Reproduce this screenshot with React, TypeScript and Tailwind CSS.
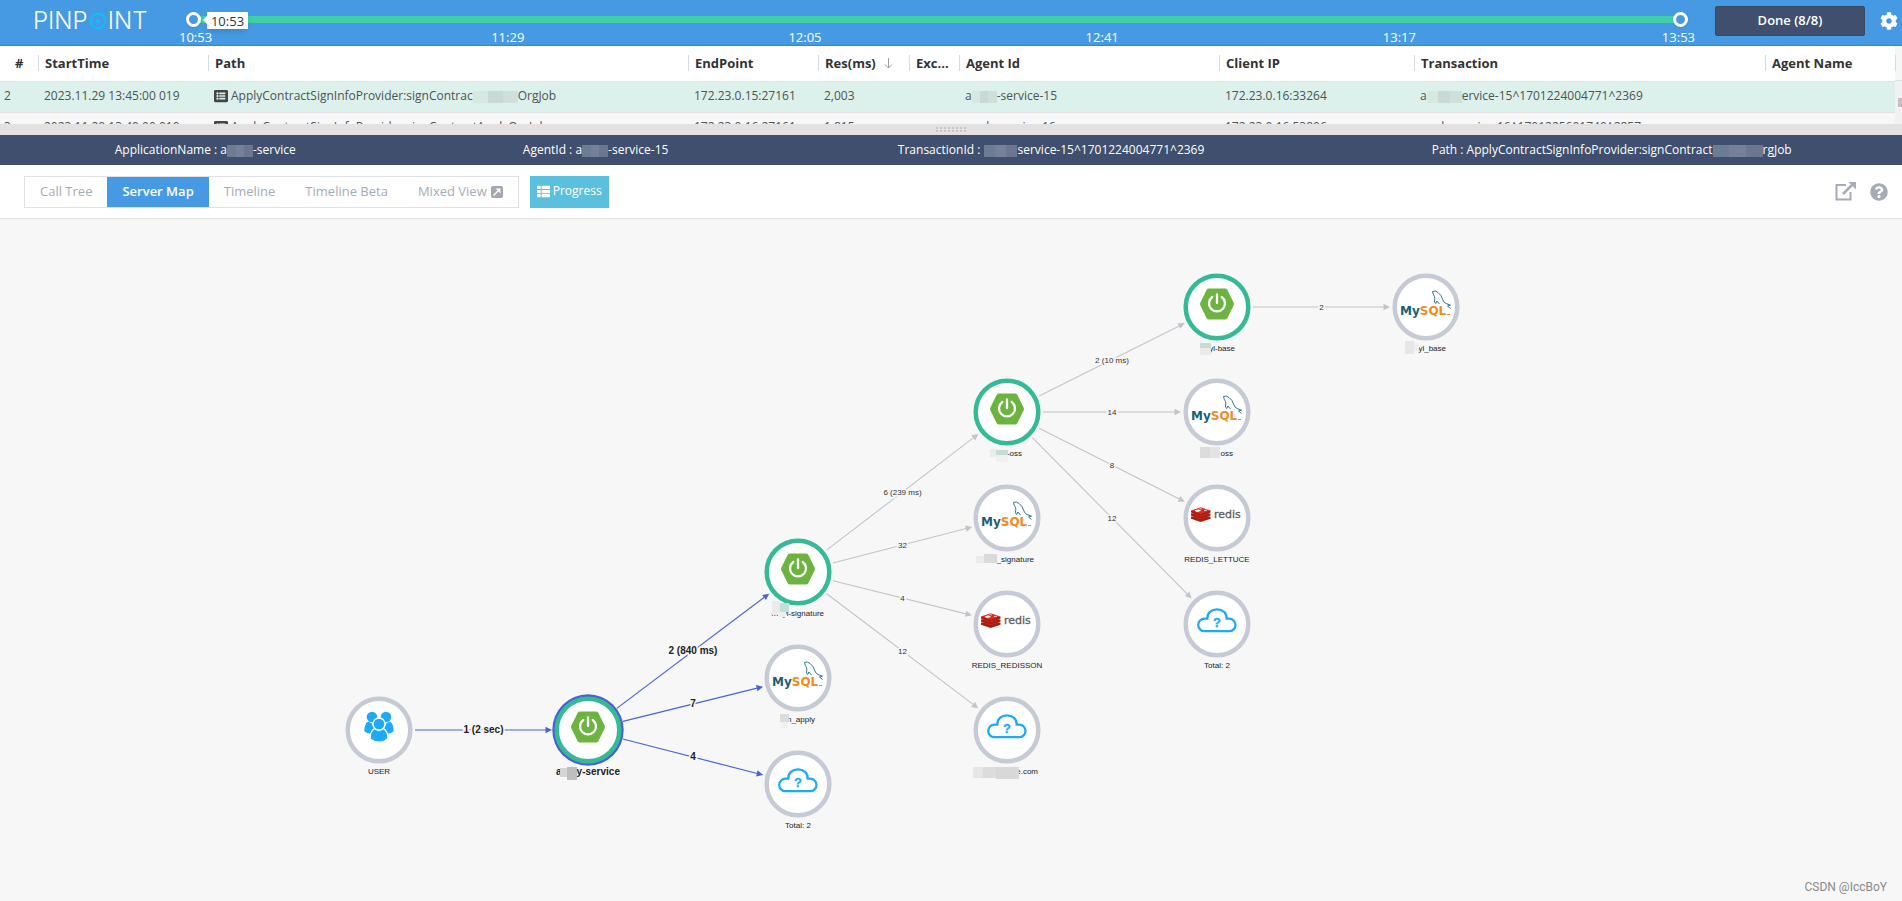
import { useState } from "react";
import type { ReactNode } from "react";
import { FaCog, FaListAlt, FaQuestionCircle, FaThList } from "react-icons/fa";

type Patch = { x: number; y: number; w: number; h: number; color: string };

type MapNode = {
  id: string;
  x: number;
  y: number;
  kind: "user" | "spring" | "mysql" | "redis" | "unknown";
  label: string;
  // right edge of the label, for labels whose first letters are masked
  labelEnd?: number;
  patches?: Patch[];
  selected?: boolean;
};

type MapLink = { from: string; to: string; label: string; active?: boolean };

const nodes: MapNode[] = [
  { id: "user", x: 379, y: 511, kind: "user", label: "USER" },
  {
    id: "apply",
    x: 588,
    y: 511,
    kind: "spring",
    label: "apply-service",
    selected: true,
    patches: [
      { x: -28, y: 38, w: 8, h: 9, color: "#d4d4d4" },
      { x: -21, y: 37, w: 10, h: 13, color: "#bebebe" },
    ],
  },
  {
    id: "signature",
    x: 798,
    y: 353,
    kind: "spring",
    label: "mayi-signature",
    labelEnd: 26,
    patches: [
      { x: -26, y: 29, w: 8, h: 14, color: "#ebebeb" },
      { x: -18, y: 31, w: 9, h: 9, color: "#bfe0d5" },
      { x: -20, y: 40, w: 8, h: 5, color: "#f0f0f0" },
    ],
  },
  {
    id: "mysql-apply",
    x: 798,
    y: 459,
    kind: "mysql",
    label: "n_apply",
    labelEnd: 17,
    patches: [
      { x: -18, y: 36, w: 9, h: 8, color: "#dcdcdc" },
      { x: -17, y: 44, w: 7, h: 6, color: "#f0f0f0" },
    ],
  },
  { id: "unknown-apply", x: 798, y: 565, kind: "unknown", label: "Total: 2" },
  {
    id: "oss",
    x: 1007,
    y: 193,
    kind: "spring",
    label: "-oss",
    labelEnd: 15,
    patches: [
      { x: -17, y: 37, w: 7, h: 8, color: "#ebebeb" },
      { x: -11, y: 38, w: 12, h: 5, color: "#c5dbd3" },
      { x: -11, y: 43, w: 12, h: 7, color: "#f0f0f0" },
    ],
  },
  {
    id: "mysql-signature",
    x: 1007,
    y: 299,
    kind: "mysql",
    label: "_signature",
    labelEnd: 27,
    patches: [
      { x: -31, y: 38, w: 8, h: 7, color: "#ebebeb" },
      { x: -23, y: 36, w: 13, h: 9, color: "#dadada" },
    ],
  },
  { id: "redisson", x: 1007, y: 405, kind: "redis", label: "REDIS_REDISSON" },
  {
    id: "unknown-com",
    x: 1007,
    y: 511,
    kind: "unknown",
    label: "e.com",
    labelEnd: 31,
    patches: [
      { x: -34, y: 37, w: 10, h: 11, color: "#e6e6e6" },
      { x: -24, y: 37, w: 13, h: 11, color: "#dcdcdc" },
      { x: -11, y: 37, w: 23, h: 12, color: "#d8d8d8" },
    ],
  },
  {
    id: "base",
    x: 1217,
    y: 88,
    kind: "spring",
    label: "yl-base",
    labelEnd: 18,
    patches: [
      { x: -17, y: 36, w: 11, h: 5, color: "#c5dbd3" },
      { x: -17, y: 41, w: 11, h: 7, color: "#eaeaea" },
    ],
  },
  {
    id: "mysql-oss",
    x: 1217,
    y: 193,
    kind: "mysql",
    label: "oss",
    labelEnd: 16,
    patches: [
      { x: -17, y: 35, w: 10, h: 11, color: "#dcdcdc" },
      { x: -7, y: 35, w: 10, h: 11, color: "#e3e3e3" },
    ],
  },
  { id: "lettuce", x: 1217, y: 299, kind: "redis", label: "REDIS_LETTUCE" },
  { id: "unknown-oss", x: 1217, y: 405, kind: "unknown", label: "Total: 2" },
  {
    id: "mysql-base",
    x: 1426,
    y: 88,
    kind: "mysql",
    label: "yl_base",
    labelEnd: 20,
    patches: [
      { x: -21, y: 34, w: 9, h: 13, color: "#e6e6e6" },
      { x: -12, y: 36, w: 5, h: 8, color: "#efefef" },
    ],
  },
];

const links: MapLink[] = [
  { from: "user", to: "apply", label: "1 (2 sec)", active: true },
  { from: "apply", to: "signature", label: "2 (840 ms)", active: true },
  { from: "apply", to: "mysql-apply", label: "7", active: true },
  { from: "apply", to: "unknown-apply", label: "4", active: true },
  { from: "signature", to: "oss", label: "6 (239 ms)" },
  { from: "signature", to: "mysql-signature", label: "32" },
  { from: "signature", to: "redisson", label: "4" },
  { from: "signature", to: "unknown-com", label: "12" },
  { from: "oss", to: "base", label: "2 (10 ms)" },
  { from: "oss", to: "mysql-oss", label: "14" },
  { from: "oss", to: "lettuce", label: "8" },
  { from: "oss", to: "unknown-oss", label: "12" },
  { from: "base", to: "mysql-base", label: "2" },
];

const tabs = ["Call Tree", "Server Map", "Timeline", "Timeline Beta", "Mixed View"];

function Mask({ className = "", dark = false }: { className?: string; dark?: boolean }) {
  return (
    <span
      className={`inline-flex h-3 align-middle overflow-hidden ${className}`}
      aria-hidden="true"
    >
      <span className={`flex-1 ${dark ? "bg-[#6b7c93]" : "bg-[#d6e8e2]"}`} />
      <span className={`flex-1 ${dark ? "bg-[#77809a]" : "bg-[#c9dad5]"}`} />
      <span className={`flex-1 ${dark ? "bg-[#6c7690]" : "bg-[#cfe0db]"}`} />
    </span>
  );
}

function Logo() {
  return (
    <a
      href="#"
      aria-label="Pinpoint"
      className="flex w-[194px] shrink-0 items-center pb-[3px] pl-[33px] font-['Inter',sans-serif] text-2xl leading-none font-light text-white"
    >
      PINP
      <svg width="20" height="18" viewBox="0 0 20 18">
        <circle cx="10" cy="9" r="7.3" fill="none" stroke="#08c4fb" strokeWidth="1.7" />
        <circle cx="10" cy="9" r="2" fill="#08c4fb" />
      </svg>
      INT
    </a>
  );
}

const rangeClass =
  "pointer-events-none absolute -left-2 top-3 h-[15px] w-[calc(100%+16px)] appearance-none bg-transparent [&::-webkit-slider-thumb]:pointer-events-auto [&::-webkit-slider-thumb]:size-[15px] [&::-webkit-slider-thumb]:cursor-pointer [&::-webkit-slider-thumb]:appearance-none [&::-webkit-slider-thumb]:rounded-full [&::-webkit-slider-thumb]:border-3 [&::-webkit-slider-thumb]:border-white [&::-webkit-slider-thumb]:bg-[#469ae4] [&::-webkit-slider-thumb]:shadow";

function TimeSlider() {
  const [start, setStart] = useState(0);
  const [end, setEnd] = useState(180);

  return (
    <div className="relative flex-1 pt-4 text-[13px] leading-4 text-white">
      <div className="h-[7px] bg-[#3fd0a7]" />
      <input
        type="range"
        aria-label="Start of range"
        min={0}
        max={180}
        value={start}
        onChange={(e) => setStart(Math.min(Number(e.target.value), end))}
        className={rangeClass}
      />
      <input
        type="range"
        aria-label="End of range"
        min={0}
        max={180}
        value={end}
        onChange={(e) => setEnd(Math.max(Number(e.target.value), start))}
        className={rangeClass}
      />
      <div className="absolute left-[13px] top-3 flex h-[17px] w-[41px] items-center justify-center bg-white text-[#333] shadow-md">
        <span className="absolute -left-1 top-1 border-y-4 border-r-4 border-y-transparent border-r-white" />
        10:53
      </div>
      <div className="mt-[6px] grid grid-cols-5">
        <span className="-ml-[15px]">10:53</span>
        <span>11:29</span>
        <span>12:05</span>
        <span>12:41</span>
        <span className="-mr-[15px] flex justify-between">
          <span>13:17</span>
          <span>13:53</span>
        </span>
      </div>
    </div>
  );
}

function Th({ children }: { children: ReactNode }) {
  return (
    <th className="p-0 text-left font-bold">
      <div className="flex items-center gap-2 border-l border-[#d8dbe0] pl-1.5 leading-4 whitespace-nowrap">
        {children}
      </div>
    </th>
  );
}

function TransactionTable() {
  const cell = "overflow-hidden p-0 pb-px pl-1.5 leading-5 whitespace-nowrap";
  return (
    <div className="flex h-[78px] overflow-hidden bg-white">
      <table className="min-w-0 flex-1 table-fixed border-collapse">
        <colgroup>
          <col className="w-[38px]" />
          <col className="w-[170px]" />
          <col className="w-[480px]" />
          <col className="w-[130px]" />
          <col className="w-[91px]" />
          <col className="w-[50px]" />
          <col className="w-[260px]" />
          <col className="w-[195px]" />
          <col className="w-[351px]" />
          <col className="w-[130px]" />
        </colgroup>
        <thead>
          <tr className="h-[35px] border-b border-[#dfe1e4] text-[13px] text-[#333]">
            <th className="p-0 pl-[15px] text-left font-bold">#</th>
            <Th>StartTime</Th>
            <Th>Path</Th>
            <Th>EndPoint</Th>
            <Th>
              Res(ms)
              <svg width="9" height="11" viewBox="0 0 9 11" fill="none" stroke="#9a9fa6">
                <path d="M4.5 0v10M1 6.500l3.500 3.500 3.500-3.500" />
              </svg>
            </Th>
            <Th>Exc...</Th>
            <Th>Agent Id</Th>
            <Th>Client IP</Th>
            <Th>Transaction</Th>
            <Th>Agent Name</Th>
          </tr>
        </thead>
        <tbody className="text-xs text-[#4f5256]">
          <tr className="h-[31px] border-b border-[#dfe1e4] bg-[#dcf1eb]">
            <td className="p-0 pb-px pl-1">2</td>
            <td className={cell}>2023.11.29 13:45:00 019</td>
            <td className={cell}>
              <span className="flex items-center gap-[3px]">
                <FaListAlt className="size-[14px] text-[#444]" />
                <span>
                  ApplyContractSignInfoProvider:signContrac
                  <Mask className="w-[45px]" />
                  OrgJob
                </span>
              </span>
            </td>
            <td className={cell}>172.23.0.15:27161</td>
            <td className={cell}>2,003</td>
            <td />
            <td className={cell}>
              a<Mask className="w-[25px]" />
              -service-15
            </td>
            <td className={cell}>172.23.0.16:33264</td>
            <td className={cell}>
              a<Mask className="w-[35px]" />
              ervice-15^1701224004771^2369
            </td>
            <td />
          </tr>
          <tr className="h-[31px] bg-[#f7f7f7]">
            <td className="p-0 pb-px pl-1">3</td>
            <td className={cell}>2023.11.29 13:40:00 019</td>
            <td className={cell}>
              <span className="flex items-center gap-[3px]">
                <FaListAlt className="size-[14px] text-[#444]" />
                ApplyContractSignInfoProvider:signContractApplyOrgJob
              </span>
            </td>
            <td className={cell}>172.23.0.16:27161</td>
            <td className={cell}>1,815</td>
            <td />
            <td className={cell}>apply-service-16</td>
            <td className={cell}>172.23.0.16:53806</td>
            <td className={cell}>apply-service-16^1701225601740^2857</td>
            <td />
          </tr>
        </tbody>
      </table>
      <div className="flex w-[7px] flex-col">
        <div className="flex h-[35px] items-center border-b border-[#dfe1e4] bg-[#f5f7f7]">
          <span className="h-4 border-l border-[#d8dbe0]" />
        </div>
        <div className="flex-1 bg-[#f1f1f1] pt-[17px] pl-[3px]">
          <div className="h-[9px] bg-[#c1c1c1]" />
        </div>
      </div>
    </div>
  );
}

function NodeIcon({ kind }: { kind: MapNode["kind"] }) {
  if (kind === "user") {
    return (
      <g fill="#1eaaf6">
        <circle cx="-7" cy="-13" r="5.300" />
        <circle cx="7" cy="-13" r="5.300" />
        <path d="M-11-8.500c-2.500 1.500-3.700 5-3.700 9.500 1.500 1.800 4 2.600 7 2.600l3-5-3-5.500zM11-8.500c2.500 1.500 3.700 5 3.700 9.500-1.500 1.800-4 2.600-7 2.600l-3-5 3-5.500z" />
        <g stroke="#fff" strokeWidth="1.300">
          <path d="M-4.500-1.500c-3 2-4.500 5.500-4.500 10C-6.500 11 -3.500 12.200 0 12.200S6.500 11 9 8.500c0-4.500-1.500-8-4.500-10C2 .7-2 .7-4.500-1.500z" />
          <circle cx="0" cy="-6" r="6" />
        </g>
      </g>
    );
  }
  if (kind === "spring") {
    return (
      <g transform="translate(0 -3)">
        <path
          d="M-8-15.500H8q1.500 0 2.300 1.300l6.300 12.700q.8 1.500 0 3L10.300 14.200q-.8 1.300-2.300 1.300H-8q-1.500 0-2.300-1.300L-16.600 1.500q-.8-1.500 0-3l6.300-12.700q.8-1.300 2.300-1.300z"
          fill="#6db33f"
        />
        <path
          d="M-4.700-7A8 8 0 1 0 4.700-7M0-9.500V-1"
          fill="none"
          stroke="#fff"
          strokeWidth="2.300"
          strokeLinecap="round"
        />
      </g>
    );
  }
  if (kind === "mysql") {
    return (
      <g>
        <text
          x="-26"
          y="8"
          fontSize="12"
          fontWeight="bold"
          fontFamily="DejaVu Sans, sans-serif"
        >
          <tspan fill="#1c5f73">My</tspan>
          <tspan fill="#f08c1e">SQL</tspan>
        </text>
        <path d="M21 7.500h3" stroke="#f08c1e" />
        <path
          d="M6.500-15.500Q9.500-17 12-14.500Q15.500-12 16.500-8Q17.500-4.500 20-3.500L24.500-1.800L21.500-1L24.500 1.500M6.500-15.500Q7-12.500 8.500-10.500Q9.200-8 8.500-6Q8.500-4 9.800-3.500L10.800-6L13.500-3"
          fill="none"
          stroke="#33758a"
          strokeWidth="1"
          strokeLinejoin="round"
        />
      </g>
    );
  }
  if (kind === "redis") {
    return (
      <g>
        <path d="M-26-1.500v2.300l9.700 3.200 9.800-3.200v-2.300z" fill="#a41e11" />
        <path d="M-26-2.200l9.700-3 9.800 3-9.800 3.400z" fill="#d82c20" />
        <path d="M-26-4.600v2l9.700 3.200 9.800-3.200v-2z" fill="#a41e11" />
        <path d="M-26-5l9.700-3 9.800 3-9.800 3.400z" fill="#d82c20" />
        <path d="M-26-7.400v2l9.700 3.200 9.800-3.200v-2z" fill="#a41e11" />
        <path d="M-26-7.400l9.700-3.300 9.800 3.300-9.800 3.400z" fill="#d82c20" />
        <path
          d="M-22-7.400l3.500-.8 2 .9-3.500 1zM-17.500-9.500l2.500.5M-13-7.400l3-.5"
          fill="#fff"
          stroke="#fff"
          strokeWidth=".7"
        />
        <text
          x="-3"
          y="0"
          fontSize="11"
          fill="#5c5c5c"
          stroke="#5c5c5c"
          strokeWidth=".3"
          fontFamily="DejaVu Sans, sans-serif"
        >
          redis
        </text>
      </g>
    );
  }
  return (
    <g>
      <path
        d="M-12.500 7.200A6.300 6.300 0 0 1-12.500-5.400H-9.700C-10-11-5.500-14.700 0-14.700S10-11 9.700-5.400H12.200A6.300 6.300 0 0 1 12.200 7.200z"
        fill="none"
        stroke="#1eaaf6"
        strokeWidth="2.300"
      />
      <text
        y="3"
        fontSize="13"
        fontWeight="bold"
        fill="#1eaaf6"
        stroke="#1eaaf6"
        strokeWidth=".3"
        textAnchor="middle"
      >
        ?
      </text>
    </g>
  );
}

function Link({ link }: { link: MapLink }) {
  const a = nodes.find((n) => n.id === link.from)!;
  const b = nodes.find((n) => n.id === link.to)!;
  const length = Math.hypot(b.x - a.x, b.y - a.y);
  const angle = (Math.atan2(b.y - a.y, b.x - a.x) * 180) / Math.PI;
  const color = link.active ? "#4a63d2" : "#c1c4ca";

  return (
    <g>
      <g transform={`translate(${a.x} ${a.y}) rotate(${angle})`}>
        <path d={`M36 0H${length - 40}`} stroke={color} strokeWidth={link.active ? 1.2 : 1.1} />
        <path d={`M${length - 36} 0l-6.500-3.200v6.400z`} fill={color} />
      </g>
      <text
        x={(a.x + b.x) / 2}
        y={(a.y + b.y) / 2 + 3}
        textAnchor="middle"
        fontSize={link.active ? 10 : 8}
        fontWeight={link.active ? "bold" : "normal"}
        fill={link.active ? "#222" : "#333"}
        stroke="#f7f7f7"
        strokeWidth="3"
        paintOrder="stroke"
      >
        {link.label}
      </text>
    </g>
  );
}

function ServerMap() {
  return (
    <svg
      viewBox="0 0 1902 682"
      className="block h-auto w-full"
      fontFamily="Liberation Sans, Arial, sans-serif"
      role="img"
      aria-label="Server map"
    >
      {links.map((link) => (
        <Link key={`${link.from}-${link.to}`} link={link} />
      ))}
      {nodes.map((node) => (
        <g key={node.id} transform={`translate(${node.x} ${node.y})`}>
          {node.selected && <circle r="35.700" fill="#4a5fd6" />}
          <circle
            r="31.300"
            fill="#fff"
            stroke={node.kind === "spring" ? "#34ba94" : "#c5cad4"}
            strokeWidth="4.500"
          />
          <NodeIcon kind={node.kind} />
          <text
            x={node.labelEnd ?? 0}
            y={node.selected ? 45 : 44}
            textAnchor={node.labelEnd ? "end" : "middle"}
            fontSize={node.selected ? 10 : 8}
            fontWeight={node.selected ? "bold" : "normal"}
            fill="#222"
          >
            {node.label}
          </text>
          {node.patches?.map((p, i) => (
            <rect key={i} x={p.x} y={p.y} width={p.w} height={p.h} fill={p.color} />
          ))}
        </g>
      ))}
    </svg>
  );
}

export default function App() {
  const [activeTab, setActiveTab] = useState("Server Map");

  return (
    <div className="flex min-h-screen flex-col bg-[#f7f7f7] font-['Open_Sans','Noto_Sans',sans-serif]">
      <header className="flex h-[46px] border-b border-[#3b7fd2] bg-[#469ae4]">
        <Logo />
        <TimeSlider />
        <button className="mt-1.5 ml-[35px] h-[30px] w-[150px] rounded-xs border border-[#394863] bg-[#404f6d] text-[13px] font-semibold text-white">
          Done (8/8)
        </button>
        <button aria-label="Settings" className="mr-1 ml-[15px] pb-1 text-white">
          <FaCog className="size-[18px]" />
        </button>
      </header>

      <TransactionTable />

      <div className="flex h-[11px] items-center justify-center bg-[#e2e2e2]">
        <div className="grid grid-cols-8 gap-x-[2px] gap-y-px">
          {Array.from({ length: 16 }, (_, i) => (
            <span key={i} className="size-[2px] bg-[#c6c6c6]" />
          ))}
        </div>
      </div>

      <div className="grid h-[30px] grid-cols-[41fr_37fr_54fr_58fr] items-center bg-[#404f6d] text-center text-xs whitespace-nowrap text-white">
        <span>
          ApplicationName : a<Mask dark className="w-[26px]" />
          -service
        </span>
        <span>
          AgentId : a<Mask dark className="w-[26px]" />
          -service-15
        </span>
        <span>
          TransactionId : <Mask dark className="w-[34px]" />
          service-15^1701224004771^2369
        </span>
        <span>
          Path : ApplyContractSignInfoProvider:signContract
          <Mask dark className="w-[50px]" />
          rgJob
        </span>
      </div>

      <div className="flex h-[54px] items-center border-b border-[#dfe1e4] bg-white pr-[14px] pl-6">
        <div role="tablist" className="flex h-8 border border-[#dfe1e4] text-[13px]">
          {tabs.map((tab) => (
            <button
              key={tab}
              role="tab"
              aria-selected={tab === activeTab}
              onClick={() => setActiveTab(tab)}
              className={`flex items-center gap-1 px-[15px] ${
                tab === activeTab
                  ? "bg-[#469ae4] font-semibold text-white"
                  : "text-[#a5abb5]"
              }`}
            >
              {tab}
              {tab === "Mixed View" && (
                <svg width="12" height="12" viewBox="0 0 12 12">
                  <rect width="12" height="12" rx="2" fill="#a2a7b0" />
                  <path d="M2.500 9.500L7 5" stroke="#fff" strokeWidth="1.500" />
                  <path d="M4.500 2.500h5v5z" fill="#fff" />
                </svg>
              )}
            </button>
          ))}
        </div>
        <button className="ml-[11px] flex h-8 items-center gap-[3px] bg-[#5bc0de] px-[7px] pb-px text-xs text-white">
          <FaThList className="size-[13px]" />
          Progress
        </button>
        <div className="ml-auto flex items-center gap-[14px] text-[#a7abb6]">
          <button aria-label="Open in new window">
            <svg
              width="21"
              height="19"
              viewBox="0 0 21 19"
              fill="none"
              stroke="currentColor"
              strokeWidth="2"
            >
              <path d="M11 3H1.500v14.500h14V10" />
              <path d="M8 12l9-9" strokeWidth="2.500" />
              <path d="M13.500 0H21v7.500z" fill="currentColor" stroke="none" />
            </svg>
          </button>
          <button aria-label="Help">
            <FaQuestionCircle className="size-[18px]" />
          </button>
        </div>
      </div>

      <main className="relative flex-1">
        <ServerMap />
        <span className="absolute right-[15px] bottom-[6px] font-['Roboto',sans-serif] text-xs text-[#8a8a8a]">
          CSDN @IccBoY
        </span>
      </main>
    </div>
  );
}
